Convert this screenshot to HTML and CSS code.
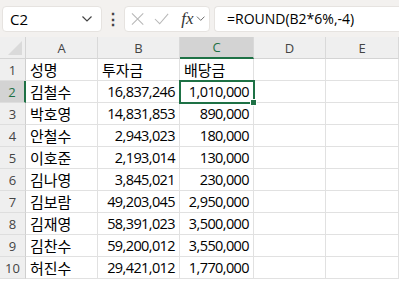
FILE: index.html
```html
<!DOCTYPE html>
<html lang="ko">
<head>
    <meta charset="UTF-8">
    <title>배당금</title>
    <link rel="stylesheet" href="styles.css">
</head>
<body>

    <div class="formula-row">
        <div class="name-box">
            <span>C2</span>
            <svg width="12" height="8" viewBox="0 0 12 8"><path d="M1.5 1.5 L6 6 L10.5 1.5" fill="none" stroke="#444" stroke-width="1.2"/></svg>
        </div>
        <div class="dots">⋮</div>
        <div class="fx-box">
            <svg width="14" height="14" viewBox="0 0 14 14"><path d="M1 1 L13 13 M13 1 L1 13" stroke="#b8b8b8" stroke-width="1.1"/></svg>
            <svg width="16" height="14" viewBox="0 0 16 14"><path d="M1 7 L6 12 L15 1.5" fill="none" stroke="#b8b8b8" stroke-width="1.1"/></svg>
            <span class="fx">fx</span>
            <svg width="10" height="7" viewBox="0 0 10 7"><path d="M1 1.5 L5 5.5 L9 1.5" fill="none" stroke="#666" stroke-width="1"/></svg>
        </div>
        <div class="formula">=ROUND(B2*6%,-4)</div>
    </div>

    <div class="sheet">
        <div class="corner"><span class="tri"></span></div>
        <div class="col-head">A</div>
        <div class="col-head">B</div>
        <div class="col-head active">C</div>
        <div class="col-head">D</div>
        <div class="col-head">E</div>

        <div class="row-head">1</div>
        <div class="cell">성명</div><div class="cell">투자금</div><div class="cell">배당금</div><div class="cell"></div><div class="cell"></div>

        <div class="row-head active">2</div>
        <div class="cell">김철수</div><div class="cell num">16,837,246</div><div class="cell num selected">1,010,000<span class="handle"></span></div><div class="cell"></div><div class="cell"></div>

        <div class="row-head">3</div>
        <div class="cell">박호영</div><div class="cell num">14,831,853</div><div class="cell num">890,000</div><div class="cell"></div><div class="cell"></div>

        <div class="row-head">4</div>
        <div class="cell">안철수</div><div class="cell num">2,943,023</div><div class="cell num">180,000</div><div class="cell"></div><div class="cell"></div>

        <div class="row-head">5</div>
        <div class="cell">이호준</div><div class="cell num">2,193,014</div><div class="cell num">130,000</div><div class="cell"></div><div class="cell"></div>

        <div class="row-head">6</div>
        <div class="cell">김나영</div><div class="cell num">3,845,021</div><div class="cell num">230,000</div><div class="cell"></div><div class="cell"></div>

        <div class="row-head">7</div>
        <div class="cell">김보람</div><div class="cell num">49,203,045</div><div class="cell num">2,950,000</div><div class="cell"></div><div class="cell"></div>

        <div class="row-head">8</div>
        <div class="cell">김재영</div><div class="cell num">58,391,023</div><div class="cell num">3,500,000</div><div class="cell"></div><div class="cell"></div>

        <div class="row-head">9</div>
        <div class="cell">김찬수</div><div class="cell num">59,200,012</div><div class="cell num">3,550,000</div><div class="cell"></div><div class="cell"></div>

        <div class="row-head">10</div>
        <div class="cell">허진수</div><div class="cell num">29,421,012</div><div class="cell num">1,770,000</div><div class="cell"></div><div class="cell"></div>
    </div>

</body>
</html>
```

FILE: styles.css
```css
/* Page */
body {
    margin: 0;
    width: 399px;
    height: 281px;
    overflow: hidden;
    background: #ffffff;
    font-family: "Open Sans", "Noto Sans CJK KR", sans-serif;
    color: #000000;
}

/* Formula Bar */
.formula-row {
    display: flex;
    align-items: center;
    height: 37px;
    padding: 0 0 0 2px;
    background: #f3f1ef;
    box-sizing: border-box;
}

.name-box, .fx-box, .formula {
    height: 26px;
    background: #ffffff;
    border: 1px solid #e6e3e0;
    border-radius: 4px;
    box-sizing: border-box;
    display: flex;
    align-items: center;
}

.name-box {
    width: 100px;
    padding: 0 8px 0 7px;
    justify-content: space-between;
    font-size: 15px;
}

.dots {
    width: 22px;
    text-align: center;
    font-size: 16px;
    font-weight: bold;
    color: #444;
}

.fx-box {
    width: 86px;
    padding: 0 4px 0 6px;
    gap: 10px;
}

.fx {
    font-family: "Liberation Serif", serif;
    font-style: italic;
    font-size: 17px;
    color: #333;
    margin-left: 2px;
    margin-right: -8px;
}

.formula {
    flex: 1;
    margin-left: 4px;
    padding-left: 12px;
    border-right: none;
    border-radius: 4px 0 0 4px;
    font-size: 14px;
}

/* Grid */
.sheet {
    display: grid;
    grid-template-columns: 26px 72px 82px 74px 72px 73px;
    grid-template-rows: repeat(11, 22px);
    font-size: 15px;
}

.corner, .col-head, .row-head {
    background: #efefef;
    color: #444;
    box-sizing: border-box;
}

.corner {
    position: relative;
    border-right: 1px solid #d4d4d4;
    border-bottom: 1px solid #d4d4d4;
}

.tri {
    position: absolute;
    right: 3px;
    bottom: 3px;
    width: 0;
    height: 0;
    border-left: 14px solid transparent;
    border-bottom: 14px solid #dadada;
}

.col-head {
    display: flex;
    justify-content: center;
    align-items: center;
    border-right: 1px solid #d9d9d9;
    border-bottom: 1px solid #d4d4d4;
    font-size: 13px;
}

.col-head.active {
    background: #d3d3d3;
    color: #1e7145;
    border-bottom: 2px solid #1e7145;
}

.row-head {
    display: flex;
    justify-content: center;
    align-items: center;
    border-right: 1px solid #cfcfcf;
    border-bottom: 1px solid #dedede;
    font-size: 13px;
}

.row-head.active {
    color: #1e7145;
    background: #d3d3d3;
    border-right: 2px solid #1e7145;
}

.cell {
    display: flex;
    align-items: center;
    padding: 0 3px 0 4px;
    border-right: 1px solid #e1e1e1;
    border-bottom: 1px solid #e1e1e1;
    box-sizing: border-box;
    white-space: nowrap;
    overflow: hidden;
}

.num {
    justify-content: flex-end;
    font-size: 14.5px;
    letter-spacing: -0.6px;
    padding-right: 4px;
}

.selected {
    position: relative;
    overflow: visible;
    outline: 2px solid #1e7145;
    outline-offset: -1px;
}

.handle {
    position: absolute;
    right: -4px;
    bottom: -4px;
    width: 5px;
    height: 5px;
    background: #1e7145;
    border: 1px solid #fff;
}
```
